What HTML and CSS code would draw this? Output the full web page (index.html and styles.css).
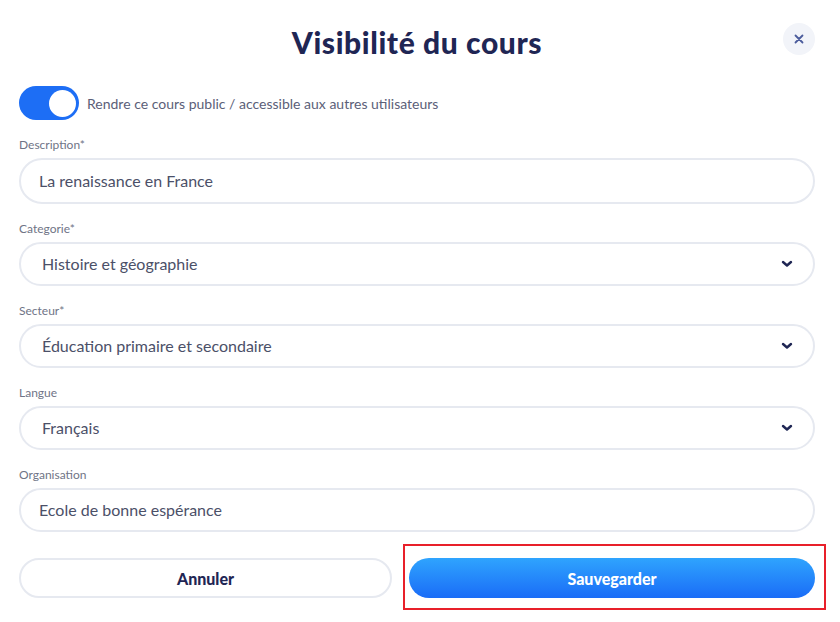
FILE: index.html
```html
<!DOCTYPE html>
<html lang="fr">
<head>
    <meta charset="UTF-8">
    <meta name="viewport" content="width=device-width, initial-scale=1.0">
    <title>Visibilité du cours</title>
    <link rel="stylesheet" href="styles.css">
</head>
<body>
    <div class="modal">
        <div class="header">
            <h1>Visibilité du cours</h1>
            <button class="close" type="button" aria-label="Fermer">
                <svg width="10" height="10" viewBox="0 0 10 10"><path d="M1.5 1.5 L8.5 8.5 M8.5 1.5 L1.5 8.5" stroke="#4b5c9c" stroke-width="1.8" stroke-linecap="round"/></svg>
            </button>
        </div>

        <label class="switch-row">
            <span class="switch"><span class="knob"></span></span>
            <span class="switch-text">Rendre ce cours public / accessible aux autres utilisateurs</span>
        </label>

        <form class="fields">
            <div class="field">
                <label>Description*</label>
                <div class="input tall">La renaissance en France</div>
            </div>
            <div class="field">
                <label>Categorie*</label>
                <div class="input select">Histoire et géographie
                    <svg class="chevron" width="12" height="8" viewBox="0 0 12 8"><path d="M2 2 L6 5.5 L10 2" fill="none" stroke="#1f2654" stroke-width="2.4" stroke-linecap="round" stroke-linejoin="round"/></svg>
                </div>
            </div>
            <div class="field">
                <label>Secteur*</label>
                <div class="input select">Éducation primaire et secondaire
                    <svg class="chevron" width="12" height="8" viewBox="0 0 12 8"><path d="M2 2 L6 5.5 L10 2" fill="none" stroke="#1f2654" stroke-width="2.4" stroke-linecap="round" stroke-linejoin="round"/></svg>
                </div>
            </div>
            <div class="field">
                <label>Langue</label>
                <div class="input select">Français
                    <svg class="chevron" width="12" height="8" viewBox="0 0 12 8"><path d="M2 2 L6 5.5 L10 2" fill="none" stroke="#1f2654" stroke-width="2.4" stroke-linecap="round" stroke-linejoin="round"/></svg>
                </div>
            </div>
            <div class="field">
                <label>Organisation</label>
                <div class="input">Ecole de bonne espérance</div>
            </div>
        </form>

        <div class="actions">
            <button class="btn cancel" type="button">Annuler</button>
            <div class="highlight">
                <button class="btn save" type="button">Sauvegarder</button>
            </div>
        </div>
    </div>
</body>
</html>
```

FILE: styles.css
```css
body {
    margin: 0;
    background: #fff;
    font-family: 'Lato', 'Noto Sans', sans-serif;
    color: #4b5068;
}
.modal {
    padding: 20px 25px 30px 19px;
}
.header {
    position: relative;
    height: 44px;
    display: flex;
    justify-content: center;
    align-items: center;
}
h1 {
    margin: 0;
    font-size: 30px;
    font-weight: 900;
    color: #1f2654;
    letter-spacing: 0.6px;
}
.close {
    position: absolute;
    right: 0;
    top: 3px;
    width: 32px;
    height: 32px;
    border: none;
    border-radius: 50%;
    background: #f2f4f9;
    display: flex;
    align-items: center;
    justify-content: center;
    padding: 0;
}
.switch-row {
    display: flex;
    align-items: center;
    gap: 8px;
    margin-top: 22px;
}
.switch {
    width: 60px;
    height: 34px;
    border-radius: 17px;
    background: #1d6ef5;
    display: flex;
    align-items: center;
    justify-content: flex-end;
    padding-right: 3px;
    box-sizing: border-box;
}
.knob {
    width: 27px;
    height: 27px;
    border-radius: 50%;
    background: #fff;
}
.switch-text {
    font-size: 14px;
    color: #5b6078;
}
.fields {
    margin-top: 18px;
    display: flex;
    flex-direction: column;
    gap: 18px;
}
.field label {
    display: block;
    font-size: 12px;
    line-height: 14px;
    color: #6f7486;
    margin-bottom: 6px;
}
.input {
    height: 44px;
    box-sizing: border-box;
    border: 2px solid #e6e9f0;
    border-radius: 23px;
    padding: 0 18px 1px;
    display: flex;
    align-items: center;
    font-size: 16px;
    color: #4b5068;
}
.tall {
    height: 46px;
}
.select {
    padding-left: 21px;
    justify-content: space-between;
    padding-right: 20px;
}
.actions {
    margin-top: 26px;
    display: grid;
    grid-template-columns: 373fr 406fr;
    gap: 17px;
}
.btn {
    height: 40px;
    border-radius: 20px;
    font-family: inherit;
    font-size: 16px;
    font-weight: 900;
    cursor: pointer;
}
.cancel {
    border: 2px solid #e6e9f0;
    background: #fff;
    color: #1f2654;
}
.highlight {
    position: relative;
    display: flex;
}
.highlight::after {
    content: '';
    position: absolute;
    left: -6px;
    right: -11px;
    top: -14px;
    bottom: -12px;
    border: 2px solid #e8202a;
}
.save {
    flex: 1;
    border: none;
    color: #fff;
    background: linear-gradient(#2fa4fe, #1a6cf7);
}
```
